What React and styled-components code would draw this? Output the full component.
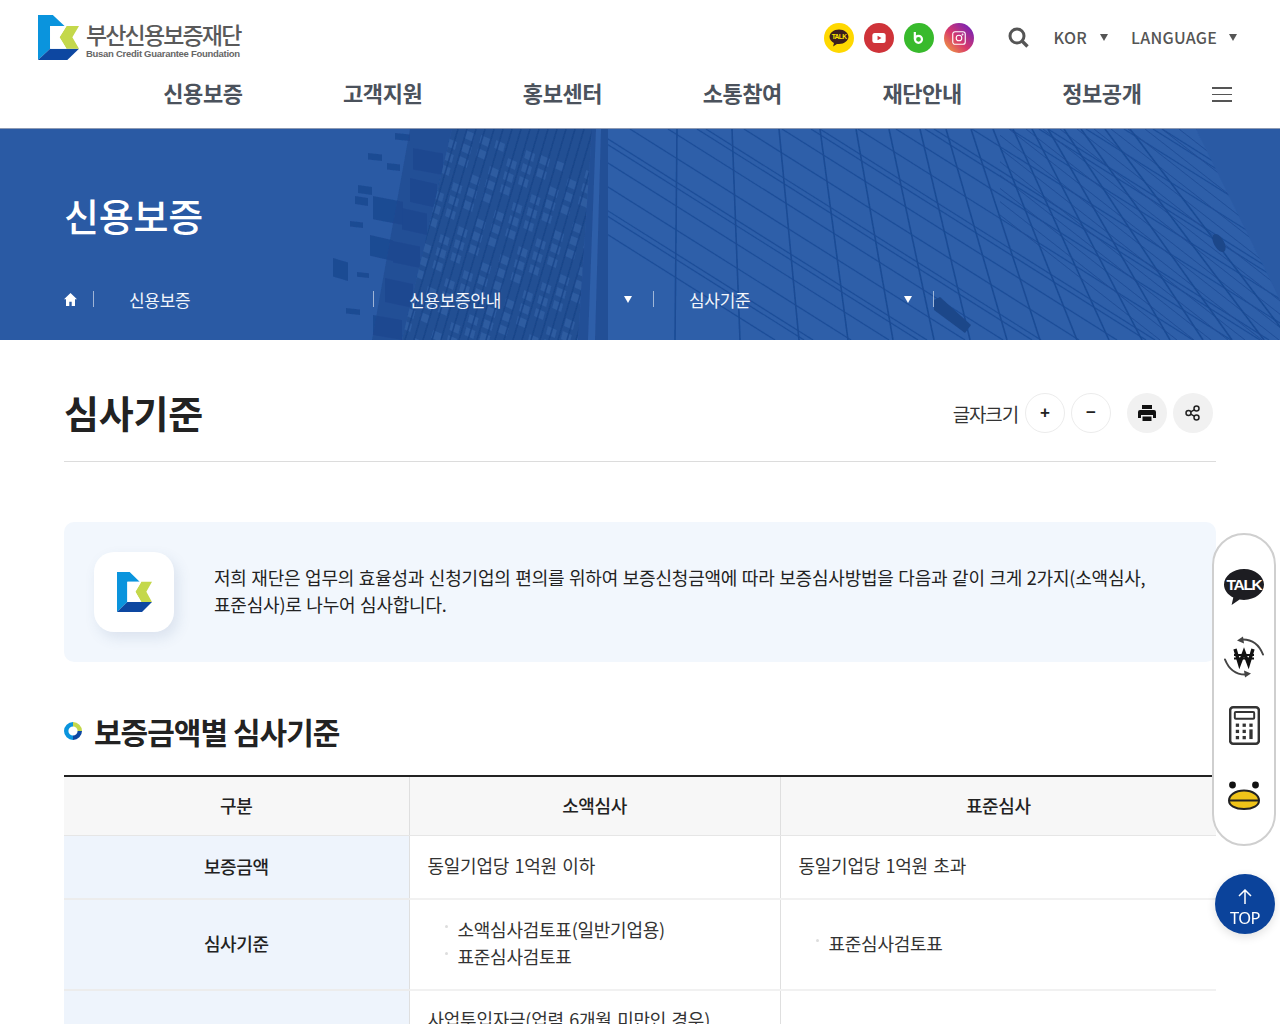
import React from "react";
import styled, { createGlobalStyle } from "styled-components";

const Global = createGlobalStyle`
  html, body { margin: 0; padding: 0; height: 1024px; overflow: hidden; background: #fff; }
  body { font-family: "Noto Sans CJK KR", "Noto Sans", sans-serif; color: #222; }
  * { box-sizing: border-box; }
`;

const Page = styled.div`width: 1280px; height: 1024px; overflow: hidden; position: relative;`;
const Header = styled.header`height: 129px; border-bottom: 1px solid #8d9ab3; display: flex; flex-direction: column;`;
const TopRow = styled.div`height: 75px; display: flex; align-items: center; padding: 0 43px 0 38px;`;
const LogoLink = styled.a`display: flex; align-items: flex-start; gap: 7px;`;
const LogoText = styled.div`display: flex; flex-direction: column; margin-top: 6px; color: #5a5a5a;`;
const LogoKo = styled.span`font-size: 23px; line-height: 27px; font-weight: 500; letter-spacing: -1.85px; white-space: nowrap;`;
const LogoEn = styled.span`font-family: "Liberation Sans", sans-serif; font-size: 9.5px; line-height: 11px; font-weight: 700; letter-spacing: -0.28px; white-space: nowrap; color: #666;`;
const Socials = styled.div`display: flex; gap: 10px; margin-left: auto;`;
const Social = styled.a`width: 30px; height: 30px; border-radius: 50%; background: ${p => p.$bg}; display: flex; align-items: center; justify-content: center;`;
const SearchBtn = styled.span`display: flex; margin: 0 25px 0 34px;`;
const Lang = styled.span`display: flex; align-items: center; padding-bottom: 2px; font-size: 16px; font-weight: 500; color: #555; letter-spacing: 0.25px; margin-left: ${p => p.$ml || 0}px;`;
const Caret = styled.i`display: block; width: 0; height: 0; margin-top: ${p => p.$mt || 0}px; border-left: 4.5px solid transparent; border-right: 4.5px solid transparent; border-top: 7px solid ${p => p.$c || "#555"}; margin-left: ${p => p.$ml || 12}px;`;
const Nav = styled.nav`flex: 1; display: flex; align-items: flex-start; padding-left: 113px; position: relative;`;
const NavItem = styled.a`width: 179.8px; text-align: center; font-size: 22px; line-height: 34px; font-weight: 700; color: #4b525c; letter-spacing: -0.42px;`;
const Burger = styled.span`margin: 12px 0 0 20px; width: 20px; display: flex; flex-direction: column; gap: 5px; & > i { display: block; height: 1.5px; background: #555; }`;

const Banner = styled.section`height: 211px; background: #2a5aa4; position: relative; overflow: hidden; color: #fff; padding-left: 64px; display: flex; flex-direction: column;`;
const BannerArt = styled.svg`position: absolute; left: 0; top: 0;`;
const BannerTitle = styled.h2`position: relative; margin: 58px 0 0; font-size: 38px; line-height: 56px; font-weight: 500; letter-spacing: -0.2px;`;
const Crumbs = styled.div`position: relative; display: flex; margin-top: 48px; height: 16px; align-items: center;`;
const HomeCell = styled.span`width: 29px; height: 16px; display: flex; align-items: center;`;
const Crumb = styled.span`width: 280px; height: 16px; border-left: 1px solid rgba(255,255,255,.55); padding: 0 21px 0 35px; display: flex; align-items: center; justify-content: space-between; font-size: 17px; letter-spacing: -0.3px; color: #f3f6fb;`;
const CrumbEnd = styled.span`width: 1px; height: 16px; background: rgba(255,255,255,.55);`;

const Main = styled.main`padding: 0 64px; width: 1280px;`;
const TitleRow = styled.div`height: 122px; border-bottom: 1px solid #dcdcdc; display: flex; align-items: center; padding: 23px 3px 0 0;`;
const PageTitle = styled.h1`margin: 0; font-size: 38px; line-height: 50px; font-weight: 700; letter-spacing: -0.2px; color: #222;`;
const Tools = styled.div`margin-left: auto; display: flex; align-items: center; margin-top: 2px;`;
const ToolLabel = styled.span`font-size: 19px; letter-spacing: -1.15px; color: #333; margin-right: 7px;`;
const RoundBtn = styled.button`width: 40px; height: 40px; border-radius: 50%; padding: 0; margin: 0 0 0 ${p => p.$ml || 0}px; border: ${p => p.$fill ? "0" : "1px solid #ececec"}; background: ${p => p.$fill ? "#f1f1f1" : "#fff"}; display: flex; align-items: center; justify-content: center; font-family: "Liberation Sans", sans-serif; font-size: 17px; font-weight: 700; color: #222;`;

const Info = styled.div`margin-top: 60px; height: 140px; border-radius: 10px; background: #f2f7fd; display: flex; align-items: center; padding-left: 30px; gap: 40px;`;
const LogoTile = styled.div`width: 80px; height: 80px; flex: none; border-radius: 20px; background: #fff; box-shadow: 4px 6px 14px rgba(60,90,140,.13); display: flex; align-items: center; justify-content: center;`;
const InfoText = styled.p`margin: 0 0 2px; width: 940px; font-size: 18px; line-height: 27px; letter-spacing: -0.2px; word-spacing: 0.8px; color: #222;`;

const SectionTitle = styled.h3`margin: 47px 0 0; height: 44px; display: flex; align-items: center; gap: 12px; font-size: 30px; font-weight: 700; letter-spacing: -0.98px; color: #222;`;
const Table = styled.table`margin-top: 22px; width: 1152px; border-collapse: collapse; table-layout: fixed; border-top: 2px solid #222;`;
const Th = styled.th`height: 59px; padding: 0 0 2px; background: #f7f7f7; font-size: 18px; font-weight: 500; letter-spacing: -0.4px; color: #222; border-bottom: 1px solid #e6e6e6; border-left: ${p => p.$first ? 0 : "1px solid #dfdfdf"};`;
const RowHead = styled.th`height: ${p => p.$h}px; padding: 0 0 ${p => p.$pb || 0}px; background: #eef4fc; font-size: 18px; font-weight: 500; letter-spacing: -0.4px; color: #222; border-bottom: 2px solid #ececec;`;
const Td = styled.td`height: ${p => p.$h}px; padding: ${p => p.$top ? "15px 18px 0" : `0 18px ${p.$pb ?? 2}px`}; font-size: 18px; line-height: 27px; letter-spacing: -0.25px; word-spacing: 1.7px; color: #333; border-left: 1px solid #dfdfdf; border-bottom: 2px solid #f1f1f1; vertical-align: ${p => p.$top ? "top" : "middle"};`;
const List = styled.ul`list-style: none; margin: 0; padding: 0 0 0 12px;`;
const Li = styled.li`position: relative; padding-left: 18px; &::before { content: ""; position: absolute; left: 5px; top: 9px; width: 3px; height: 3px; border-radius: 50%; background: #ddd; }`;

const Dock = styled.aside`position: fixed; left: 1212px; top: 533px; width: 64px; height: 313px; border-radius: 32px; border: 2px solid #cfcfcf; background: #fff; display: flex; flex-direction: column; align-items: center;`;
const DockItem = styled.a`height: ${p => p.$h}px; display: flex; align-items: flex-start; justify-content: center; width: 100%; padding-top: ${p => p.$pt || 0}px;`;
const TopBtn = styled.a`position: fixed; left: 1215px; top: 874px; width: 60px; height: 60px; border-radius: 50%; background: #0b439b; color: #fff; display: flex; flex-direction: column; align-items: center; padding-top: 15px; font-family: "Noto Sans", sans-serif; font-size: 16.5px; line-height: 19px; letter-spacing: -0.6px; box-shadow: 0 3px 10px rgba(0,0,0,.12); & > span { margin-top: 4px; }`;

const Mark = ({ w = 41, h = 45 }) => (
  <svg width={w} height={h} viewBox="0 0 105 119" preserveAspectRatio="none">
    <polygon points="0,0 38,0 68,29 31,29 31,89 0,119" fill="#0a94dd" />
    <polygon points="0,119 31,89 105,89 75,119" fill="#0d47a1" />
    <polygon points="73,29 105,29 88,59 105,89 73,89 55,59" fill="#c4d84b" />
    <polygon points="31,29 73,29 55,59 73,89 31,89" fill="#fff" />
  </svg>
);

const facadeVerticals = [[677,675],[732,740],[779,799],[820,848],[856,893],[889,934],[920,970],[946,1007],[971,1040],[993,1077],[1013,1109],[1032,1142],[1048,1170],[1064,1203],[1081,1232],[1105,1264],[1130,1290]];
const sparseDiagonals = Array.from({ length: 22 }, (_, i) => ({ x0: 440 + i * 38, double: i % 3 === 1 }));
const denseDiagonals = Array.from({ length: 22 }, (_, i) => 930 + i * 17);
const towerLines = Array.from({ length: 26 }, (_, i) => 360 + i * 9);
const towerPanes = [];
for (let r = 0; r < 17; r++) {
  for (let c = 0; c < 13; c++) {
    if ((r * 7 + c * 3) % 4 !== 0) {
      const x = 400 + c * 15 + (16 - r) * 3.2;
      const y = 125 + r * 13 + c * 5;
      towerPanes.push(`${x},${y} ${x + 9},${y + 4} ${x + 7},${y + 12} ${x - 2},${y + 8}`);
    }
  }
}
const windows = [
  [413,148,30,27],[410,178,27,30],[373,196,30,29],[402,208,25,27],[393,241,27,27],[370,235,23,26],
  [333,258,15,23],[385,278,28,30],[373,315,29,25],[350,221,13,7],[355,196,13,10],[358,185,14,10],
  [368,153,14,8],[387,163,13,8],[395,133,15,8],[357,272,12,6],[346,308,14,7],
];

const BannerPicture = () => (
  <BannerArt width="1280" height="211" viewBox="0 129 1280 211">
    <defs>
      <clipPath id="facade"><polygon points="608,129 1196,129 1280,300 1280,340 608,340" /></clipPath>
      <clipPath id="tower"><polygon points="452,129 592,129 578,340 402,340" /></clipPath>
      <clipPath id="dense"><rect x="1000" y="129" width="280" height="211" /></clipPath>
      <filter id="soft"><feGaussianBlur stdDeviation="0.7" /></filter>
    </defs>
    <g filter="url(#soft)">
      <polygon points="410,129 452,129 402,340 372,340" fill="#1f4c92" opacity=".8" />
      {windows.map(([x, y, w, h], i) => (
        <polygon key={i} points={`${x},${y} ${x + w},${y + h * 0.2} ${x + w},${y + h} ${x},${y + h * 0.8}`} fill="#1b4890" opacity=".85" />
      ))}
      <g clipPath="url(#tower)">
        <rect x="400" y="129" width="200" height="211" fill="#234f93" />
        {towerPanes.map((p, i) => <polygon key={i} points={p} fill="#3a6ab1" opacity=".45" />)}
        {towerLines.map((x, i) => <line key={i} x1={x} y1="340" x2={x + 62} y2="129" stroke="#184488" strokeWidth="1.5" opacity=".8" />)}
      </g>
      <polygon points="592,129 608,129 608,340 578,340" fill="#244f96" />
      <polygon points="596,129 601,129 595,340 588,340" fill="#2f5fa9" />
      <g clipPath="url(#facade)">
        <rect x="606" y="129" width="674" height="211" fill="#2d5ea9" />
        {sparseDiagonals.map(({ x0, double }, i) => (
          <g key={i} stroke="#1e4e98" strokeWidth="1.2">
            <line x1={x0} y1="129" x2={x0 + 335} y2="340" />
            {double && <line x1={x0 - 9} y1="129" x2={x0 + 326} y2="340" />}
          </g>
        ))}
        <g clipPath="url(#dense)">
          {denseDiagonals.map((x, i) => <line key={i} x1={x - 40} y1="129" x2={x + 230} y2="340" stroke="#214f98" strokeWidth="1" />)}
        </g>
        {facadeVerticals.map(([a, b], i) => <line key={i} x1={a} y1="129" x2={b} y2="340" stroke="#1a4b94" strokeWidth="1.5" />)}
      </g>
      <polygon points="934,300 940,297 971,325 965,333 934,310" fill="#1d4789" />
      <ellipse cx="1219" cy="243" rx="5" ry="10" transform="rotate(-30 1219 243)" fill="#1c4689" />
    </g>
  </BannerArt>
);

const KakaoIcon = ({ w = 16, h = 14, fill = "#3c1e1e", text = "#ffe400", size = 14 }) => (
  <svg width={w} height={h} viewBox="0 0 42 38">
    <path d="M21 1C9.900 1 1 8 1 16.600c0 5.500 3.700 10.300 9.300 13L8.600 37l8-5.400c1.400.2 2.900.3 4.400.3 11.100 0 20-7 20-15.300S32.100 1 21 1Z" fill={fill} />
    <text x="21" y="21.800" fontFamily="Liberation Sans, sans-serif" fontWeight="700" fontSize={size} letterSpacing="-1.300" fill={text} textAnchor="middle">TALK</text>
  </svg>
);

const WonIcon = () => (
  <svg width="42" height="42" viewBox="0 0 42 42" fill="none">
    <path d="M20 3.500c9 0 16 5 20 15" stroke="#444" strokeWidth="2" strokeLinecap="round" />
    <path d="M20 0.500l-6 4 7 3Z" fill="#444" />
    <path d="M22 38.500c-9 0-16-5-20-15" stroke="#444" strokeWidth="2" strokeLinecap="round" />
    <path d="M22 41.500l6-4-7-3Z" fill="#444" />
    <path d="M12 13l4.500 15L21 16l4.500 12L30 13" stroke="#111" strokeWidth="3.400" />
    <path d="M11 19h20M11 22.500h20" stroke="#111" strokeWidth="1.800" />
  </svg>
);

const CalcIcon = () => (
  <svg width="31" height="39" viewBox="0 0 32 40" fill="none">
    <rect x="1.200" y="1.200" width="29.600" height="37.600" rx="3" stroke="#333" strokeWidth="2.600" />
    <rect x="6" y="6" width="20" height="7" rx="1" stroke="#333" strokeWidth="2" />
    {[0, 1, 2].map(r => [0, 1, 2].map(c => (c === 2 && r > 0 ? null : <rect key={`${r}${c}`} x={7 + c * 7} y={18 + r * 6.400} width="3.400" height="3.400" fill="#333" />)))}
    <rect x="21" y="24" width="3.400" height="10" fill="#333" />
  </svg>
);

const DuckIcon = () => (
  <svg width="32" height="30" viewBox="0 0 32 30">
    <circle cx="4.500" cy="4" r="3.400" fill="#111" />
    <circle cx="27.500" cy="4" r="3.400" fill="#111" />
    <path d="M16 9.500c9 0 15 5 15 10s-6 8.500-15 8.500S1 24.500 1 19.500 7 9.500 16 9.500Z" fill="#f0c419" stroke="#222" strokeWidth="2" />
    <path d="M2 19.500h28" stroke="#222" strokeWidth="2" />
  </svg>
);

export default function App() {
  return (
    <Page>
      <Global />
      <Header>
        <TopRow>
          <LogoLink>
            <Mark />
            <LogoText>
              <LogoKo>부산신용보증재단</LogoKo>
              <LogoEn>Busan Credit Guarantee Foundation</LogoEn>
            </LogoText>
          </LogoLink>
          <Socials>
            <Social $bg="#ffd800"><KakaoIcon w={20} h={18} /></Social>
            <Social $bg="#cf3339">
              <svg width="14" height="10" viewBox="0 0 16 12"><rect width="16" height="12" rx="3" fill="#fff" /><polygon points="6.300,3.300 11,6 6.300,8.700" fill="#cf3339" /></svg>
            </Social>
            <Social $bg="#38ba2c">
              <svg width="11" height="13" viewBox="0 0 12 14" fill="none"><path d="M2 1v8" stroke="#fff" strokeWidth="2.400" /><circle cx="6" cy="9" r="3.800" stroke="#fff" strokeWidth="2.400" /></svg>
            </Social>
            <Social $bg="linear-gradient(45deg,#f0a040 5%,#d8386b 45%,#6a1fc0 95%)">
              <svg width="14" height="14" viewBox="0 0 15 15" fill="none" stroke="#fff" strokeWidth="1.200"><rect x=".8" y=".8" width="13.400" height="13.400" rx="2.500" /><circle cx="7.500" cy="7.500" r="3" /><circle cx="11.300" cy="3.700" r=".4" /></svg>
            </Social>
          </Socials>
          <SearchBtn>
            <svg width="21" height="21" viewBox="0 0 21 21" fill="none" stroke="#555"><circle cx="9" cy="9" r="7" strokeWidth="3" /><path d="M14 14l5.500 5.500" strokeWidth="3.400" /></svg>
          </SearchBtn>
          <Lang>KOR<Caret $ml={13} $mt={2} /></Lang>
          <Lang $ml={23}>LANGUAGE<Caret $ml={12} $mt={2} /></Lang>
        </TopRow>
        <Nav>
          {["신용보증", "고객지원", "홍보센터", "소통참여", "재단안내", "정보공개"].map(t => <NavItem key={t}>{t}</NavItem>)}
          <Burger><i /><i /><i /></Burger>
        </Nav>
      </Header>

      <Banner>
        <BannerPicture />
        <BannerTitle>신용보증</BannerTitle>
        <Crumbs>
          <HomeCell>
            <svg width="13" height="13" viewBox="0 0 13 13"><path d="M6.500 0L0 6.300h2V13h3.300V8.800h2.400V13H11V6.300h2Z" fill="#fff" /></svg>
          </HomeCell>
          <Crumb>신용보증</Crumb>
          <Crumb>신용보증안내<Caret $c="#fff" $ml={0.01} /></Crumb>
          <Crumb>심사기준<Caret $c="#fff" $ml={0.01} /></Crumb>
          <CrumbEnd />
        </Crumbs>
      </Banner>

      <Main>
        <TitleRow>
          <PageTitle>심사기준</PageTitle>
          <Tools>
            <ToolLabel>글자크기</ToolLabel>
            <RoundBtn>+</RoundBtn>
            <RoundBtn $ml={6}>−</RoundBtn>
            <RoundBtn $fill $ml={16}>
              <svg width="18" height="17" viewBox="0 0 18 17"><path d="M4 0h10v4H4ZM2 5h14a2 2 0 0 1 2 2v6h-3v-3H3v3H0V7a2 2 0 0 1 2-2Z" fill="#111" /><rect x="4.500" y="11.500" width="9" height="4.500" fill="#111" /></svg>
            </RoundBtn>
            <RoundBtn $fill $ml={6}>
              <svg width="16" height="16" viewBox="0 0 16 16" fill="none" stroke="#222" strokeWidth="1.500"><circle cx="3.500" cy="8" r="2.500" /><circle cx="11.500" cy="3.500" r="2.500" /><circle cx="11.500" cy="12.500" r="2.500" /><path d="M5.700 6.800l3.600-2M5.700 9.200l3.600 2" /></svg>
            </RoundBtn>
          </Tools>
        </TitleRow>

        <Info>
          <LogoTile><Mark w={35} h={40} /></LogoTile>
          <InfoText>저희 재단은 업무의 효율성과 신청기업의 편의를 위하여 보증신청금액에 따라 보증심사방법을 다음과 같이 크게 2가지(소액심사, 표준심사)로 나누어 심사합니다.</InfoText>
        </Info>

        <SectionTitle>
          <svg width="18" height="18" viewBox="0 0 18 18" fill="none" strokeWidth="4.400">
            <path d="M9 2.200A6.800 6.800 0 0 1 15.800 9" stroke="#c4d84b" />
            <path d="M15.800 9A6.800 6.800 0 0 1 9 15.800" stroke="#0d47a1" />
            <path d="M9 15.800A6.800 6.800 0 0 1 9 2.200" stroke="#0a94dd" />
          </svg>
          보증금액별 심사기준
        </SectionTitle>

        <Table>
          <colgroup><col style={{ width: 345 }} /><col style={{ width: 371 }} /><col style={{ width: 436 }} /></colgroup>
          <thead>
            <tr><Th $first>구분</Th><Th>소액심사</Th><Th>표준심사</Th></tr>
          </thead>
          <tbody>
            <tr>
              <RowHead $h={64} $pb={2}>보증금액</RowHead>
              <Td $h={64}>동일기업당 1억원 이하</Td>
              <Td $h={64}>동일기업당 1억원 초과</Td>
            </tr>
            <tr>
              <RowHead $h={91} $pb={4}>심사기준</RowHead>
              <Td $h={91} $pb={4}><List><Li>소액심사검토표(일반기업용)</Li><Li>표준심사검토표</Li></List></Td>
              <Td $h={91}><List><Li>표준심사검토표</Li></List></Td>
            </tr>
            <tr>
              <RowHead $h={60} />
              <Td $h={60} $top>사업투입자금(업력 6개월 미만인 경우)</Td>
              <Td $h={60} />
            </tr>
          </tbody>
        </Table>
      </Main>

      <Dock>
        <DockItem $h={88} $pt={33}><KakaoIcon w={42} h={38} fill="#1d1d22" text="#fff" size={15.500} /></DockItem>
        <DockItem $h={55} $pt={13}><WonIcon /></DockItem>
        <DockItem $h={85} $pt={28}><CalcIcon /></DockItem>
        <DockItem $h={60} $pt={18}><DuckIcon /></DockItem>
      </Dock>
      <TopBtn>
        <svg width="14" height="15" viewBox="0 0 14 15" fill="none" stroke="#fff" strokeWidth="1.500"><path d="M7 15V1M1 7l6-6 6 6" /></svg>
        <span>TOP</span>
      </TopBtn>
    </Page>
  );
}
